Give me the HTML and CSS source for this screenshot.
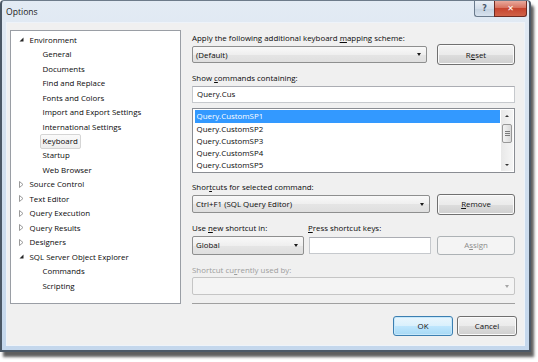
FILE: index.html
```html
<!DOCTYPE html>
<html>
<head>
<meta charset="utf-8">
<title>Options</title>
<link rel="stylesheet" href="styles.css">
</head>
<body>
<div class="window">
  <div class="titlebar">
    <span class="title">Options</span>
    <div class="caption">
      <span class="cap-help">?</span>
      <span class="cap-close">✕</span>
    </div>
  </div>
  <div class="client">
    <div class="main">
      <div class="tree">
        <div class="node"><span class="tw"><svg width="5" height="5" viewBox="0 0 5 5"><path d="M4.5 0.5 L4.5 4.5 L0.5 4.5 Z" fill="#262626"/></svg></span><span class="lbl">Environment</span></div>
        <div class="node child"><span class="lbl">General</span></div>
        <div class="node child"><span class="lbl">Documents</span></div>
        <div class="node child"><span class="lbl">Find and Replace</span></div>
        <div class="node child"><span class="lbl">Fonts and Colors</span></div>
        <div class="node child"><span class="lbl">Import and Export Settings</span></div>
        <div class="node child"><span class="lbl">International Settings</span></div>
        <div class="node child"><span class="lbl sel">Keyboard</span></div>
        <div class="node child"><span class="lbl">Startup</span></div>
        <div class="node child"><span class="lbl">Web Browser</span></div>
        <div class="node"><span class="tw"><svg width="5" height="7" viewBox="0 0 5 7"><path d="M0.5 0.5 L4 3.5 L0.5 6.5 Z" fill="none" stroke="#8f8f8f" stroke-width="0.9"/></svg></span><span class="lbl">Source Control</span></div>
        <div class="node"><span class="tw"><svg width="5" height="7" viewBox="0 0 5 7"><path d="M0.5 0.5 L4 3.5 L0.5 6.5 Z" fill="none" stroke="#8f8f8f" stroke-width="0.9"/></svg></span><span class="lbl">Text Editor</span></div>
        <div class="node"><span class="tw"><svg width="5" height="7" viewBox="0 0 5 7"><path d="M0.5 0.5 L4 3.5 L0.5 6.5 Z" fill="none" stroke="#8f8f8f" stroke-width="0.9"/></svg></span><span class="lbl">Query Execution</span></div>
        <div class="node"><span class="tw"><svg width="5" height="7" viewBox="0 0 5 7"><path d="M0.5 0.5 L4 3.5 L0.5 6.5 Z" fill="none" stroke="#8f8f8f" stroke-width="0.9"/></svg></span><span class="lbl">Query Results</span></div>
        <div class="node"><span class="tw"><svg width="5" height="7" viewBox="0 0 5 7"><path d="M0.5 0.5 L4 3.5 L0.5 6.5 Z" fill="none" stroke="#8f8f8f" stroke-width="0.9"/></svg></span><span class="lbl">Designers</span></div>
        <div class="node"><span class="tw"><svg width="5" height="5" viewBox="0 0 5 5"><path d="M4.5 0.5 L4.5 4.5 L0.5 4.5 Z" fill="#262626"/></svg></span><span class="lbl">SQL Server Object Explorer</span></div>
        <div class="node child"><span class="lbl">Commands</span></div>
        <div class="node child"><span class="lbl">Scripting</span></div>
      </div>
      <div class="pane">
        <div class="label l1">Apply the following additional keyboard <u>m</u>apping scheme:</div>
        <div class="row r1">
          <div class="combo c1"><span>(Default)</span><i class="arrow"></i></div>
          <div class="btn">R<u>e</u>set</div>
        </div>
        <div class="label l2">Show <u>c</u>ommands containing:</div>
        <div class="textbox tb1">Query.Cus</div>
        <div class="listbox">
          <div class="items">
            <div class="item selected">Query.CustomSP1</div>
            <div class="item">Query.CustomSP2</div>
            <div class="item">Query.CustomSP3</div>
            <div class="item">Query.CustomSP4</div>
            <div class="item">Query.CustomSP5</div>
          </div>
          <div class="vscroll">
            <i class="sarrow up"></i>
            <div class="strack"><div class="thumb"><span></span><span></span><span></span></div></div>
            <i class="sarrow down"></i>
          </div>
        </div>
        <div class="label l3">Shor<u>t</u>cuts for selected command:</div>
        <div class="row r2">
          <div class="combo c2"><span>Ctrl+F1 (SQL Query Editor)</span><i class="arrow"></i></div>
          <div class="btn"><u>R</u>emove</div>
        </div>
        <div class="row labels">
          <div class="label lw">Use <u>n</u>ew shortcut in:</div>
          <div class="label"><u>P</u>ress shortcut keys:</div>
        </div>
        <div class="row r3">
          <div class="combo c3"><span>Global</span><i class="arrow"></i></div>
          <div class="textbox tb2"></div>
          <div class="btn disabled">A<u>s</u>sign</div>
        </div>
        <div class="label l5 dis">Shortcut cu<u>r</u>rently used by:</div>
        <div class="combo c4 off"><span></span><i class="arrow"></i></div>
        <div class="sep"></div>
      </div>
    </div>
    <div class="footer">
      <div class="btn ok">OK</div>
      <div class="btn">Cancel</div>
    </div>
  </div>
</div>
</body>
</html>
```
FILE: styles.css
```css
* { box-sizing: border-box; }
html, body { margin: 0; padding: 0; }
body {
  width: 538px;
  height: 362px;
  overflow: hidden;
  background: #ffffff;
  font-family: "Open Sans", "Noto Sans", sans-serif;
  font-size: 7.9px;
  color: #0a0a0a;
}
u { text-decoration: underline; text-underline-offset: 1px; }

.window {
  width: 531px;
  height: 352px;
  border: 2px solid #4b5866;
  border-top: 1px solid #6d7b8a;
  border-radius: 4px 4px 0 0;
  background: linear-gradient(#e3ebf4, #d3e0ee 40%, #c4d7ec);
  padding: 0 4px 4px 4px;
  display: flex;
  flex-direction: column;
  box-shadow: 3px 5px 3px rgba(40, 40, 40, 0.75);
}

.titlebar {
  height: 21px;
  display: flex;
  align-items: flex-start;
  justify-content: space-between;
}
.title {
  margin-top: 6px;
  font-size: 8.6px;
  line-height: 10px;
  color: #1b1b1b;
}
.caption { display: flex; margin-right: -2px; }
.cap-help, .cap-close {
  height: 16px;
  display: flex;
  align-items: center;
  justify-content: center;
  font-family: "DejaVu Sans", sans-serif;
  border: 1px solid #6a7a8c;
  border-top: none;
}
.cap-help {
  width: 20px;
  border-radius: 0 0 0 3px;
  background: linear-gradient(#e9eff6, #d3dde9 50%, #c4d1df 51%, #d7e2ee);
  color: #4b5a6b;
  font-size: 8px;
  font-weight: bold;
  border-right: none;
}
.cap-close {
  width: 33px;
  border-radius: 0 0 3px 0;
  border-color: #6e2b22;
  background: linear-gradient(#e9a99c, #d7725f 45%, #c7452f 50%, #d06248);
  color: #ffffff;
  font-size: 8px;
  font-weight: bold;
}

.client {
  flex: 1;
  background: #f0f0f0;
  border: 1px solid #eef3f9;
  display: flex;
  flex-direction: column;
}
.main {
  display: flex;
  padding: 7px 7px 0 3px;
}

.tree {
  width: 171px;
  height: 274px;
  background: #ffffff;
  border: 1px solid #9a9ea5;
  padding-top: 1.5px;
}
.node {
  height: 14.47px;
  display: flex;
  align-items: center;
  line-height: 12px;
  white-space: nowrap;
}
.tw {
  width: 17.5px;
  display: flex;
  justify-content: flex-end;
  padding-right: 5px;
  align-items: center;
}
.node.child { padding-left: 28.5px; }
.lbl {
  padding: 0 2px;
  border: 1px solid transparent;
  border-radius: 2px;
  height: 15px;
  display: flex;
  align-items: center;
}
.node:not(.child) .lbl { margin-left: -2px; }
.lbl.sel {
  border-color: #d5d5d5;
  background: linear-gradient(#fafafa, #eeeeee);
}

.pane {
  margin-left: 11px;
  width: 323px;
  display: flex;
  flex-direction: column;
}
.label { line-height: 12px; height: 12px; white-space: nowrap; }
.label.dis { color: #9d9d9d; }
.l1 { margin-top: 2px; }
.row { display: flex; align-items: center; }
.r1 { height: 21px; }
.l2 { margin-top: 6.7px; }
.l3 { margin-top: 8.3px; }
.r2 { height: 21px; margin-top: 1px; }
.labels { margin-top: 7px; }
.lw { width: 116px; }
.r3 { height: 19.5px; margin-top: 1.7px; }
.l5 { margin-top: 8.8px; }

.combo {
  height: 17px;
  border: 1px solid #8e8f8f;
  border-radius: 2px;
  background: linear-gradient(#f9f9f9, #efefef 50%, #e5e5e5 51%, #dfdfdf);
  display: flex;
  align-items: center;
  justify-content: space-between;
  padding: 0 5px 0 3px;
  white-space: nowrap;
}
.arrow {
  width: 0;
  height: 0;
  border-left: 2.5px solid transparent;
  border-right: 2.5px solid transparent;
  border-top: 3px solid #1a1a1a;
}
.c1 { width: 235px; }
.c2 { width: 238px; height: 18px; }
.c3 { width: 112px; height: 19px; }
.c4 { width: 323px; height: 17.7px; margin-top: 1.3px; }
.combo.off {
  background: #f4f4f4;
  border-color: #c5c5c5;
}
.combo.off .arrow { border-top-color: #a5a5a5; }

.btn {
  margin-left: auto;
  width: 78px;
  height: 21px;
  border: 1px solid #707070;
  border-radius: 3px;
  background: linear-gradient(#f3f3f3, #ebebeb 50%, #dddddd 51%, #cfcfcf);
  box-shadow: inset 0 0 0 1px #fbfbfb;
  display: flex;
  align-items: center;
  justify-content: center;
  color: #111;
}
.r3 .btn { height: 19.5px; }
.btn.disabled {
  border-color: #adb2b5;
  background: #f4f4f4;
  box-shadow: none;
  color: #8c8c8c;
}

.textbox {
  height: 17px;
  background: #ffffff;
  border: 1px solid #c6c9cd;
  border-top-color: #abadb3;
  padding: 0 4px;
  display: flex;
  align-items: center;
}
.tb1 { width: 323px; margin-top: 2px; }
.tb2 { width: 122px; height: 17.5px; margin-left: 5px; }

.listbox {
  margin-top: 5px;
  width: 323px;
  height: 65px;
  background: #ffffff;
  border: 1px solid #8a8d93;
  display: flex;
  padding: 1px 1px 1px 2px;
}
.items { flex: 1; padding-top: 0.8px; padding-right: 1px; }
.item {
  height: 12.25px;
  line-height: 12.25px;
  padding-left: 1.5px;
}
.item.selected { background: #3399ff; color: #ffffff; }
.vscroll {
  width: 12px;
  display: flex;
  flex-direction: column;
  align-items: center;
  background: linear-gradient(90deg, #e8e8e8, #f5f5f5);
}
.sarrow {
  width: 0;
  height: 0;
  border-left: 2px solid transparent;
  border-right: 2px solid transparent;
  margin: 5px 0;
}
.sarrow.up { border-bottom: 2.5px solid #333; }
.sarrow.down { border-top: 2.5px solid #333; }
.strack { flex: 1; width: 100%; padding: 0 1px; }
.thumb {
  margin-top: 2px;
  height: 19px;
  border: 1px solid #989898;
  border-radius: 2px;
  background: linear-gradient(90deg, #f3f3f3, #e6e6e6 50%, #d9d9d9);
  display: flex;
  flex-direction: column;
  align-items: center;
  justify-content: center;
  gap: 1px;
}
.thumb span { width: 5px; height: 1px; background: #7a7a7a; }

.sep {
  margin-top: 8.3px;
  height: 1px;
  background: #a0a0a0;
}

.footer {
  display: flex;
  justify-content: flex-end;
  gap: 4px;
  padding: 11.7px 7px 0 0;
}
.footer .btn { margin-left: 0; width: 60px; height: 20px; }
.btn.ok {
  border-color: #3c7fb1;
  background: linear-gradient(#eaf6fd, #d9f0fc 50%, #bee6fd 51%, #a7d9f5);
  box-shadow: inset 0 0 0 1px #c6e8fb;
}
```
